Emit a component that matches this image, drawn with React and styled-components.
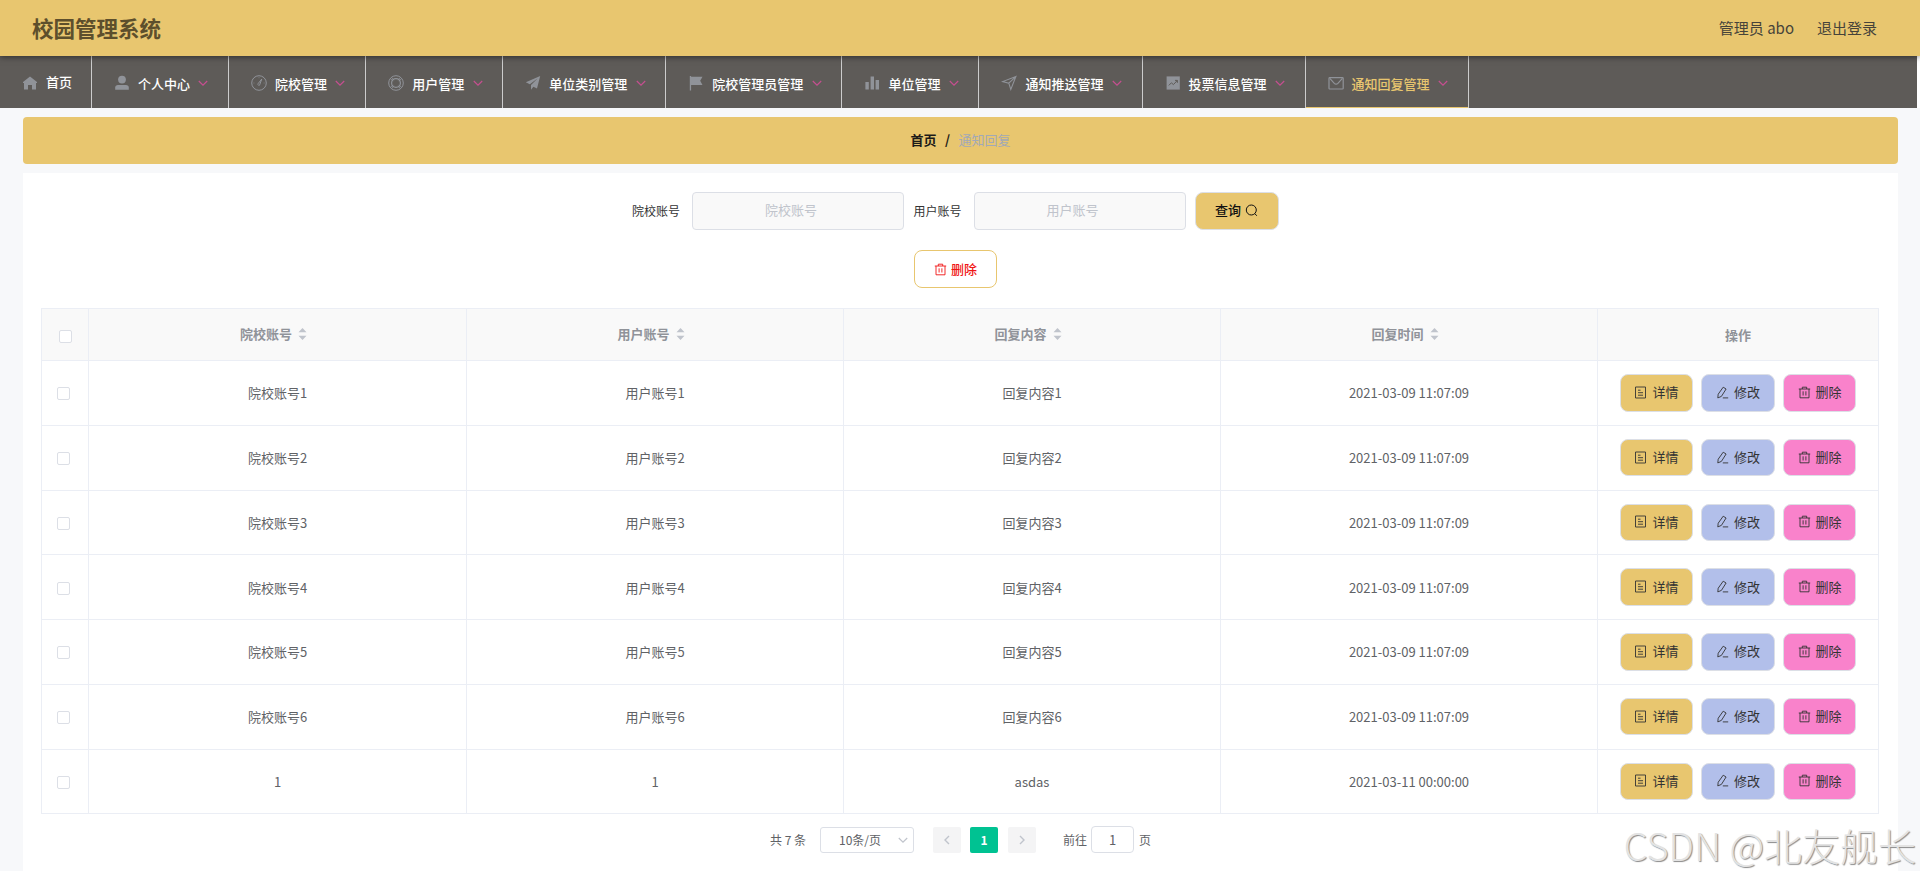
import { useState } from "react"
import styled, { createGlobalStyle } from "styled-components"

const GlobalStyle = createGlobalStyle`
  * {
    box-sizing: border-box;
  }

  body {
    margin: 0;
    background: #fff;
    font-family: "Noto Sans CJK SC", sans-serif;
    font-size: 13px;
    color: #606266;
    overflow: hidden;
  }

  button,
  input {
    font-family: inherit;
  }
`

const Page = styled.div`
  position: relative;
  width: 1920px;
  height: 879px;
  overflow: hidden;
`

const Header = styled.header`
  position: relative;
  z-index: 2;
  display: flex;
  align-items: center;
  justify-content: space-between;
  height: 56px;
  padding: 0 43px 0 32px;
  background: #e8c66f;
  box-shadow: 0 1px 6px rgba(0, 0, 0, 0.5);
`

const Title = styled.h1`
  margin: 0;
  font-size: 21.5px;
  line-height: 56px;
  font-weight: 700;
  color: #5d4f2c;
`

const UserInfo = styled.div`
  display: flex;
  gap: 23px;
  font-size: 15px;
  line-height: 56px;
  color: #46433a;
`

const Nav = styled.nav`
  display: flex;
  width: 1917px;
  height: 52px;
  background: #5e5b58;
`

const NavItem = styled.a`
  display: flex;
  align-items: center;
  height: 52px;
  padding: ${(props) => (props.$plain ? "0 19px 0 18.6px" : "0 19.7px 0 18.6px")};
  border-right: 1px solid #ccc;
  box-shadow: ${(props) => (props.$active ? "inset 0 -1px 0 #e8c66f" : "none")};
  color: ${(props) => (props.$active ? "#e8c66f" : "#fff")};
  font-weight: 500;
  white-space: nowrap;
`

const NavIcon = styled.svg`
  width: 16px;
  height: 16px;
  margin: 1px 8px 0 3.4px;
  flex: none;
  color: #909399;
`

const NavText = styled.span`
  line-height: 20px;
  padding-top: ${(props) => (props.$plain ? "0" : "4px")};
`

const NavArrow = styled.svg`
  width: 10px;
  height: 10px;
  margin: 1px 0 0 8.4px;
  flex: none;
  color: #c64f90;
`

const Main = styled.main`
  height: 763px;
  padding: 9px 22px 0 23px;
  background: #f7f8fa;
`

const Breadcrumb = styled.div`
  display: flex;
  align-items: center;
  justify-content: center;
  gap: 8.5px;
  height: 47px;
  margin-bottom: 9px;
  padding: 0 0 2px;
  border-radius: 4px;
  background: #e8c66f;
  color: #1c1b18;
  font-weight: 700;
`

const Current = styled.span`
  font-weight: 400;
  color: #a2a9b6;
`

const Panel = styled.section`
  height: 698px;
  padding: 19px 18px 0;
  background: #fff;
`

const SearchForm = styled.form`
  display: flex;
  align-items: center;
  justify-content: center;
  height: 38px;
  padding-right: 10px;
`

const Label = styled.label`
  margin-right: 12px;
  padding-bottom: 2px;
  font-size: 12px;
  color: #333;
`

const Field = styled.input`
  width: 212px;
  height: 38px;
  margin-right: 9.5px;
  padding: 0 28px 3px 14px;
  border: 1px solid #dcdfe6;
  border-radius: 4px;
  background: #f9f9f9;
  font-size: 13px;
  text-align: center;
  outline: none;

  &::placeholder {
    color: #c0c4cc;
  }
`

const SearchButton = styled.button`
  display: flex;
  align-items: center;
  justify-content: center;
  gap: 4px;
  width: 84px;
  height: 38px;
  padding: 0 1px 3px 0;
  border: 1px solid #dcdfe6;
  border-radius: 8px;
  background: #e8c66f;
  color: #111;
  font-size: 13px;
  font-weight: 500;
`

const BatchBar = styled.div`
  display: flex;
  justify-content: center;
  padding: 20px 10px 20px 0;
`

const BatchDelete = styled.button`
  display: flex;
  align-items: center;
  justify-content: center;
  gap: 4px;
  width: 83px;
  height: 38px;
  padding: 0 0 1px;
  border: 1px solid #e8c66f;
  border-radius: 8px;
  background: #fff;
  color: #f01414;
  font-size: 13px;
  font-weight: 500;
`

const Icon = styled.svg`
  width: 13px;
  height: 13px;
  margin-top: 1px;
  flex: none;
`

const Table = styled.div`
  width: 1838px;
  border: 1px solid #ebeef5;
  border-right: none;
  border-bottom: none;
`

const Row = styled.div`
  display: grid;
  grid-template-columns: 47px 378px 377px 377px 377px 281px;
  height: ${(props) => (props.$head ? "52px" : "64.75px")};
  background: ${(props) => (props.$head ? "#f9f9f9" : "#fff")};
  color: ${(props) => (props.$head ? "#909399" : "#606266")};
  font-weight: ${(props) => (props.$head ? 700 : 400)};
`

const Cell = styled.div`
  display: flex;
  align-items: center;
  justify-content: center;
  gap: 6px;
  border-right: 1px solid #ebeef5;
  border-bottom: 1px solid #ebeef5;
`

const SortCell = styled(Cell)`
  padding: 0 8px 2px 0;
`

const CheckCell = styled(Cell)`
  padding-left: ${(props) => (props.$head ? "1px" : "0")};
  padding-right: ${(props) => (props.$head ? "0" : "3px")};
  padding-top: ${(props) => (props.$head ? "4px" : "2px")};
`

const Checkbox = styled.span`
  width: 13px;
  height: 13px;
  border: 1px solid #dcdfe6;
  border-radius: 2px;
  background: #fff;
`

const SortIcon = styled.svg`
  width: 9px;
  height: 12px;
  fill: #c0c4cc;
`

const Actions = styled(Cell)`
  gap: 8px;
`

const buttonColors = {
  detail: "#e8c66f",
  edit: "#b2bfea",
  remove: "#f982cb",
}

const ActionButton = styled.button`
  display: flex;
  align-items: center;
  justify-content: center;
  gap: 5px;
  width: 73.6px;
  height: 37.4px;
  padding: 0 0 2px;
  border: 1px solid #dcdfe6;
  border-radius: 8px;
  background: ${(props) => buttonColors[props.$kind]};
  color: #333;
  font-size: 13px;
`

const Pagination = styled.div`
  display: flex;
  align-items: center;
  height: 27px;
  margin: 12px 0 0 729px;
  font-size: 12px;
  color: #606266;
`

const Total = styled.span`
  width: 50px;
`

const SizeSelect = styled.div`
  display: flex;
  align-items: center;
  justify-content: space-between;
  width: 94px;
  height: 26px;
  margin-right: 19px;
  padding: 0 5px 0 18px;
  border: 1px solid #dcdfe6;
  border-radius: 3px;

  svg {
    width: 10px;
    height: 10px;
    color: #c0c4cc;
  }
`

const PageButton = styled.button`
  display: flex;
  align-items: center;
  justify-content: center;
  width: 28px;
  height: 26px;
  margin-right: ${(props) => (props.$active ? "10px" : "9px")};
  padding: 0;
  border: none;
  border-radius: 2px;
  background: ${(props) => (props.$active ? "#00c292" : "#f4f4f5")};
  color: ${(props) => (props.$active ? "#fff" : "#c0c4cc")};
  font-size: 12px;
  font-weight: 700;
`

const Jump = styled.div`
  display: flex;
  align-items: center;
  margin-left: 18px;
`

const JumpInput = styled.input`
  width: 43px;
  height: 27px;
  margin: 0 5px 0 4px;
  padding: 0;
  border: 1px solid #dcdfe6;
  border-radius: 4px;
  color: #606266;
  font-size: 13px;
  text-align: center;
`

const Watermark = styled.div`
  position: absolute;
  right: 4px;
  bottom: 6px;
  font-size: 38px;
  font-weight: 300;
  line-height: 56px;
  color: #e3e3e3;
  text-shadow: 1px 1px 1px #8a8a8a;
  white-space: nowrap;
`

const navIcons = {
  home: <path fill="currentColor" d="M8 1.4 1 7v1h1v6.4h4V10h4v4.4h4V8h1V7z" />,
  user: (
    <g fill="currentColor">
      <circle cx="8" cy="4.6" r="3.9" />
      <path d="M1.2 14.8v-2.2c0-1.7 1.1-2.6 2.8-2.6h8c1.7 0 2.8.9 2.8 2.6v2.2z" />
    </g>
  ),
  odometer: (
    <g fill="none" stroke="currentColor">
      <circle cx="8" cy="8" r="7.3" />
      <path d="M10.8 4 8.9 9.2a1 1 0 1 1-1.7-.7z" />
      <path d="M8 2.2v1M2.4 8h1M12.6 8h1" strokeWidth=".6" />
    </g>
  ),
  help: (
    <g fill="none" stroke="currentColor">
      <circle cx="8" cy="8" r="7.3" />
      <circle cx="8" cy="8" r="4.4" strokeWidth="1.2" />
      <path
        d="m2.9 4.3 2.3 1.5M4.3 2.9l1.5 2.3M13.1 4.3l-2.3 1.5M11.7 2.9l-1.5 2.3M2.9 11.7l2.3-1.5M4.3 13.1l1.5-2.3M13.1 11.7l-2.3-1.5M11.7 13.1l-1.5-2.3"
        strokeWidth=".9"
      />
    </g>
  ),
  promotion: <path fill="currentColor" d="M15.2 1 .8 7.2l4 2L12.5 3.6 6 10v4.8l2.4-3.1 3.6 1.9z" />,
  flag: <path fill="currentColor" d="M1.8 1h1.3v.8h11.4l-2.3 4 2.3 4.2H3.1v5.6H1.8z" />,
  data: <path fill="currentColor" d="M1.4 7h3.4v7.6H1.4zM6.6 1.6H10v13H6.6zM11.6 5H15v9.6h-3.4z" />,
  position: (
    <path fill="none" stroke="currentColor" strokeWidth="1.1" d="M14.9 1.4 1.6 6.6l6.2 1.6 2 6.2zM14.6 1.8 7.8 8.2" />
  ),
  marketing: (
    <g>
      <path fill="currentColor" d="M1.6 1.4h13.2v13.2H1.6z" />
      <path fill="none" stroke="#5e5b58" d="m3.8 10.4 2.6-2.6 2 1.8 3.8-4M10 5.4h2.4v2.4" />
    </g>
  ),
  message: (
    <g fill="none" stroke="currentColor" strokeWidth="1.2">
      <rect x="1" y="2.6" width="14.2" height="11.4" rx=".8" />
      <path d="m1.8 3.4 4.5 5a2.5 2.5 0 0 0 3.6 0l4.5-5" />
    </g>
  ),
}

const menus = [
  { icon: "home", text: "首页", plain: true },
  { icon: "user", text: "个人中心" },
  { icon: "odometer", text: "院校管理" },
  { icon: "help", text: "用户管理" },
  { icon: "promotion", text: "单位类别管理" },
  { icon: "flag", text: "院校管理员管理" },
  { icon: "data", text: "单位管理" },
  { icon: "position", text: "通知推送管理" },
  { icon: "marketing", text: "投票信息管理" },
  { icon: "message", text: "通知回复管理", active: true },
]

const columns = ["院校账号", "用户账号", "回复内容", "回复时间"]

const replies = [
  ...[1, 2, 3, 4, 5, 6].map((n) => [`院校账号${n}`, `用户账号${n}`, `回复内容${n}`, "2021-03-09 11:07:09"]),
  ["1", "1", "asdas", "2021-03-11 00:00:00"],
]

const ArrowDown = () => <path d="m.8 3 4.2 4.2L9.2 3" fill="none" stroke="currentColor" strokeWidth="1.2" />

const SearchIcon = () => (
  <Icon viewBox="0 0 13 13" fill="none" stroke="currentColor">
    <circle cx="6.3" cy="6" r="5" />
    <path d="m9.8 9.6 2 2.2" />
  </Icon>
)

const DeleteIcon = () => (
  <Icon viewBox="0 0 13 13" fill="none" stroke="currentColor" strokeWidth=".9">
    <path d="M.8 3h11.4M4.3 3V1.2h4.4V3M2 3v8.8h9V3M5.1 5.3v4.2M7.9 5.3v4.2" />
  </Icon>
)

const DocIcon = () => (
  <Icon viewBox="0 0 13 13" fill="none" stroke="currentColor" strokeWidth=".9">
    <path d="M1.5 1h10v11h-10zM4 4.2h2.5M4 6.7h5M4 9.2h5" />
  </Icon>
)

const EditIcon = () => (
  <Icon viewBox="0 0 13 13" fill="none" stroke="currentColor" strokeWidth=".9">
    <path d="m7.2 1.2 2.9 1.8-4.7 7.4-3.6 1.5.4-3.7zM6.8 11.9h5.4" />
  </Icon>
)

const Sort = () => (
  <SortIcon viewBox="0 0 9 12">
    <path d="M4.5 0 8.5 4.3H.5zM4.5 12 .5 7.7h8z" />
  </SortIcon>
)

const App = () => {
  const [page, setPage] = useState("1")

  return (
    <Page>
      <GlobalStyle />
      <Header>
        <Title>校园管理系统</Title>
        <UserInfo>
          <span>管理员 abo</span>
          <span>退出登录</span>
        </UserInfo>
      </Header>

      <Nav>
        {menus.map((menu) => (
          <NavItem key={menu.text} $plain={menu.plain} $active={menu.active}>
            <NavIcon viewBox="0 0 16 16">{navIcons[menu.icon]}</NavIcon>
            <NavText $plain={menu.plain}>{menu.text}</NavText>
            {!menu.plain && (
              <NavArrow viewBox="0 0 10 10">
                <ArrowDown />
              </NavArrow>
            )}
          </NavItem>
        ))}
      </Nav>

      <Main>
        <Breadcrumb>
          <span>首页</span>
          <span>/</span>
          <Current>通知回复</Current>
        </Breadcrumb>

        <Panel>
          <SearchForm>
            <Label>院校账号</Label>
            <Field placeholder="院校账号" />
            <Label>用户账号</Label>
            <Field placeholder="用户账号" />
            <SearchButton type="button">
              查询
              <SearchIcon />
            </SearchButton>
          </SearchForm>

          <BatchBar>
            <BatchDelete>
              <DeleteIcon />
              删除
            </BatchDelete>
          </BatchBar>

          <Table>
            <Row $head>
              <CheckCell $head>
                <Checkbox />
              </CheckCell>
              {columns.map((column) => (
                <SortCell key={column}>
                  {column}
                  <Sort />
                </SortCell>
              ))}
              <Cell>操作</Cell>
            </Row>
            {replies.map((reply, index) => (
              <Row key={index}>
                <CheckCell>
                  <Checkbox />
                </CheckCell>
                {reply.map((value, i) => (
                  <Cell key={i}>{value}</Cell>
                ))}
                <Actions>
                  <ActionButton $kind="detail">
                    <DocIcon />
                    详情
                  </ActionButton>
                  <ActionButton $kind="edit">
                    <EditIcon />
                    修改
                  </ActionButton>
                  <ActionButton $kind="remove">
                    <DeleteIcon />
                    删除
                  </ActionButton>
                </Actions>
              </Row>
            ))}
          </Table>

          <Pagination>
            <Total>共 7 条</Total>
            <SizeSelect>
              10条/页
              <svg viewBox="0 0 10 10">
                <ArrowDown />
              </svg>
            </SizeSelect>
            <PageButton>
              <svg width="12" height="12" viewBox="0 0 12 12" fill="none" stroke="currentColor" strokeWidth="1.4">
                <path d="M8 2 4 6l4 4" />
              </svg>
            </PageButton>
            <PageButton $active>1</PageButton>
            <PageButton>
              <svg width="12" height="12" viewBox="0 0 12 12" fill="none" stroke="currentColor" strokeWidth="1.4">
                <path d="m4 2 4 4-4 4" />
              </svg>
            </PageButton>
            <Jump>
              前往
              <JumpInput value={page} onChange={(e) => setPage(e.target.value)} />
              页
            </Jump>
          </Pagination>
        </Panel>
      </Main>

      <Watermark>CSDN @北友舰长</Watermark>
    </Page>
  )
}

export default App
